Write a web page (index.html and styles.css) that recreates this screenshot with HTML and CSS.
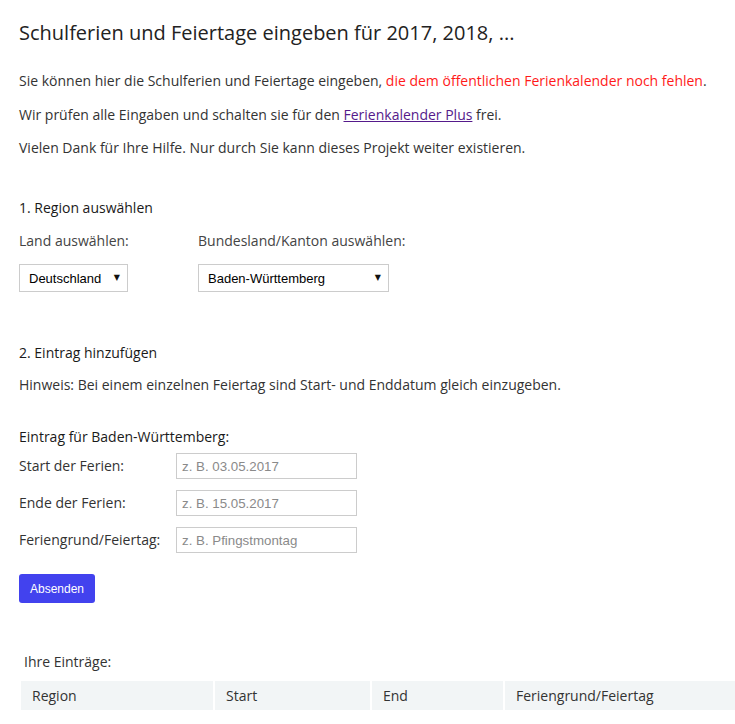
FILE: index.html
```html
<!DOCTYPE html>
<html lang="de">
<head>
<meta charset="utf-8">
<title>Schulferien und Feiertage eingeben</title>
<link rel="stylesheet" href="styles.css">
</head>
<body>
<main class="page">
  <h1 class="title">Schulferien und Feiertage eingeben für 2017, 2018, ...</h1>
  <p class="text">Sie können hier die Schulferien und Feiertage eingeben, <span class="warn">die dem öffentlichen Ferienkalender noch fehlen</span>.</p>
  <p class="text">Wir prüfen alle Eingaben und schalten sie für den <a class="link" href="#">Ferienkalender Plus</a> frei.</p>
  <p class="text">Vielen Dank für Ihre Hilfe. Nur durch Sie kann dieses Projekt weiter existieren.</p>

  <h2 class="section">1. Region auswählen</h2>
  <div class="regions">
    <div class="region region-land">
      <label class="region-label">Land auswählen:</label>
      <div class="select select-land"><select><option>Deutschland</option></select><span class="arrow">▼</span></div>
    </div>
    <div class="region">
      <label class="region-label">Bundesland/Kanton auswählen:</label>
      <div class="select select-state"><select><option>Baden-Württemberg</option></select><span class="arrow">▼</span></div>
    </div>
  </div>

  <h2 class="section section-2">2. Eintrag hinzufügen</h2>
  <p class="hint">Hinweis: Bei einem einzelnen Feiertag sind Start- und Enddatum gleich einzugeben.</p>

  <h3 class="entry-title">Eintrag für Baden-Württemberg:</h3>
  <div class="form">
    <div class="row"><label class="row-label">Start der Ferien:</label><input class="field" type="text" placeholder="z. B. 03.05.2017"></div>
    <div class="row"><label class="row-label">Ende der Ferien:</label><input class="field" type="text" placeholder="z. B. 15.05.2017"></div>
    <div class="row"><label class="row-label">Feriengrund/Feiertag:</label><input class="field" type="text" placeholder="z. B. Pfingstmontag"></div>
  </div>
  <button class="submit" type="button">Absenden</button>

  <h3 class="entries-title">Ihre Einträge:</h3>
  <table class="entries">
    <thead>
      <tr><th class="c1">Region</th><th class="c2">Start</th><th class="c3">End</th><th class="c4">Feriengrund/Feiertag</th></tr>
    </thead>
  </table>
</main>
</body>
</html>
```

FILE: styles.css
```css
html, body {
  margin: 0;
  padding: 0;
  background: #fff;
}
body {
  font-family: "Open Sans", "DejaVu Sans", sans-serif;
  font-size: 14px;
  line-height: 20px;
  color: #333;
}
.page {
  padding: 0 0 0 19px;
}
.title {
  margin: 19px 0 0;
  font-size: 20px;
  line-height: 28px;
  font-weight: 400;
  color: #222;
}
.text {
  margin: 0 0 13.5px;
}
.title + .text {
  margin-top: 24px;
}
.warn {
  color: #ff1a1a;
}
.link {
  color: #551a8b;
  text-decoration: underline;
}
.section {
  margin: 40px 0 0;
  font-size: 14px;
  line-height: 20px;
  font-weight: 400;
  color: #1a1a1a;
}
.regions {
  display: flex;
  margin-top: 13px;
}
.region {
  display: flex;
  flex-direction: column;
  align-items: flex-start;
  gap: 13px;
}
.region-land {
  width: 179px;
}
.region-label {
  color: #444;
}
.select {
  position: relative;
  height: 28px;
  box-sizing: border-box;
  border: 1px solid #ccc;
  background: #fff;
}
.select-land { width: 109px; }
.select-state { width: 191px; }
.select select {
  appearance: none;
  -webkit-appearance: none;
  border: 0;
  outline: 0;
  background: transparent;
  width: 100%;
  height: 26px;
  padding: 0 0 0 9px;
  font-family: "Liberation Sans", Arial, sans-serif;
  font-size: 13px;
  color: #000;
}
.arrow {
  position: absolute;
  right: 7px;
  top: 8px;
  font-size: 8px;
  line-height: 10px;
  color: #111;
  pointer-events: none;
  font-family: "DejaVu Sans", sans-serif;
}
.section-2 {
  margin-top: 51px;
}
.hint {
  margin: 12px 0 0;
}
.entry-title {
  margin: 32px 0 0;
  font-size: 14px;
  line-height: 20px;
  font-weight: 400;
  color: #1a1a1a;
}
.form {
  display: flex;
  flex-direction: column;
  gap: 11px;
  margin-top: 6px;
}
.row {
  display: flex;
  align-items: center;
}
.row-label {
  width: 157px;
  color: #333;
}
.field {
  box-sizing: border-box;
  width: 181px;
  height: 26px;
  margin: 0;
  border: 1px solid #ccc;
  padding: 0 5px;
  font-family: "Liberation Sans", Arial, sans-serif;
  font-size: 13.3px;
  color: #333;
}
.field::placeholder {
  color: #8a8a8a;
}
.submit {
  display: block;
  margin-top: 21px;
  width: 76px;
  height: 29px;
  border: 0;
  border-radius: 3px;
  background: #4242ee;
  color: #fff;
  font-family: "Liberation Sans", Arial, sans-serif;
  font-size: 12px;
  font-weight: 400;
  padding: 0;
}
.entries-title {
  margin: 49px 0 0 5px;
  font-size: 14px;
  line-height: 20px;
  font-weight: 400;
  color: #333;
}
.entries {
  margin-top: 9px;
  width: 718px;
  border-collapse: separate;
  border-spacing: 2px 0;
}
.entries th {
  background: #f2f5f6;
  height: 29px;
  padding: 0 11px;
  text-align: left;
  font-weight: 400;
  font-size: 14px;
  color: #333;
}
.entries .c1 { width: 170px; }
.entries .c2 { width: 133px; }
.entries .c3 { width: 109px; }
```
